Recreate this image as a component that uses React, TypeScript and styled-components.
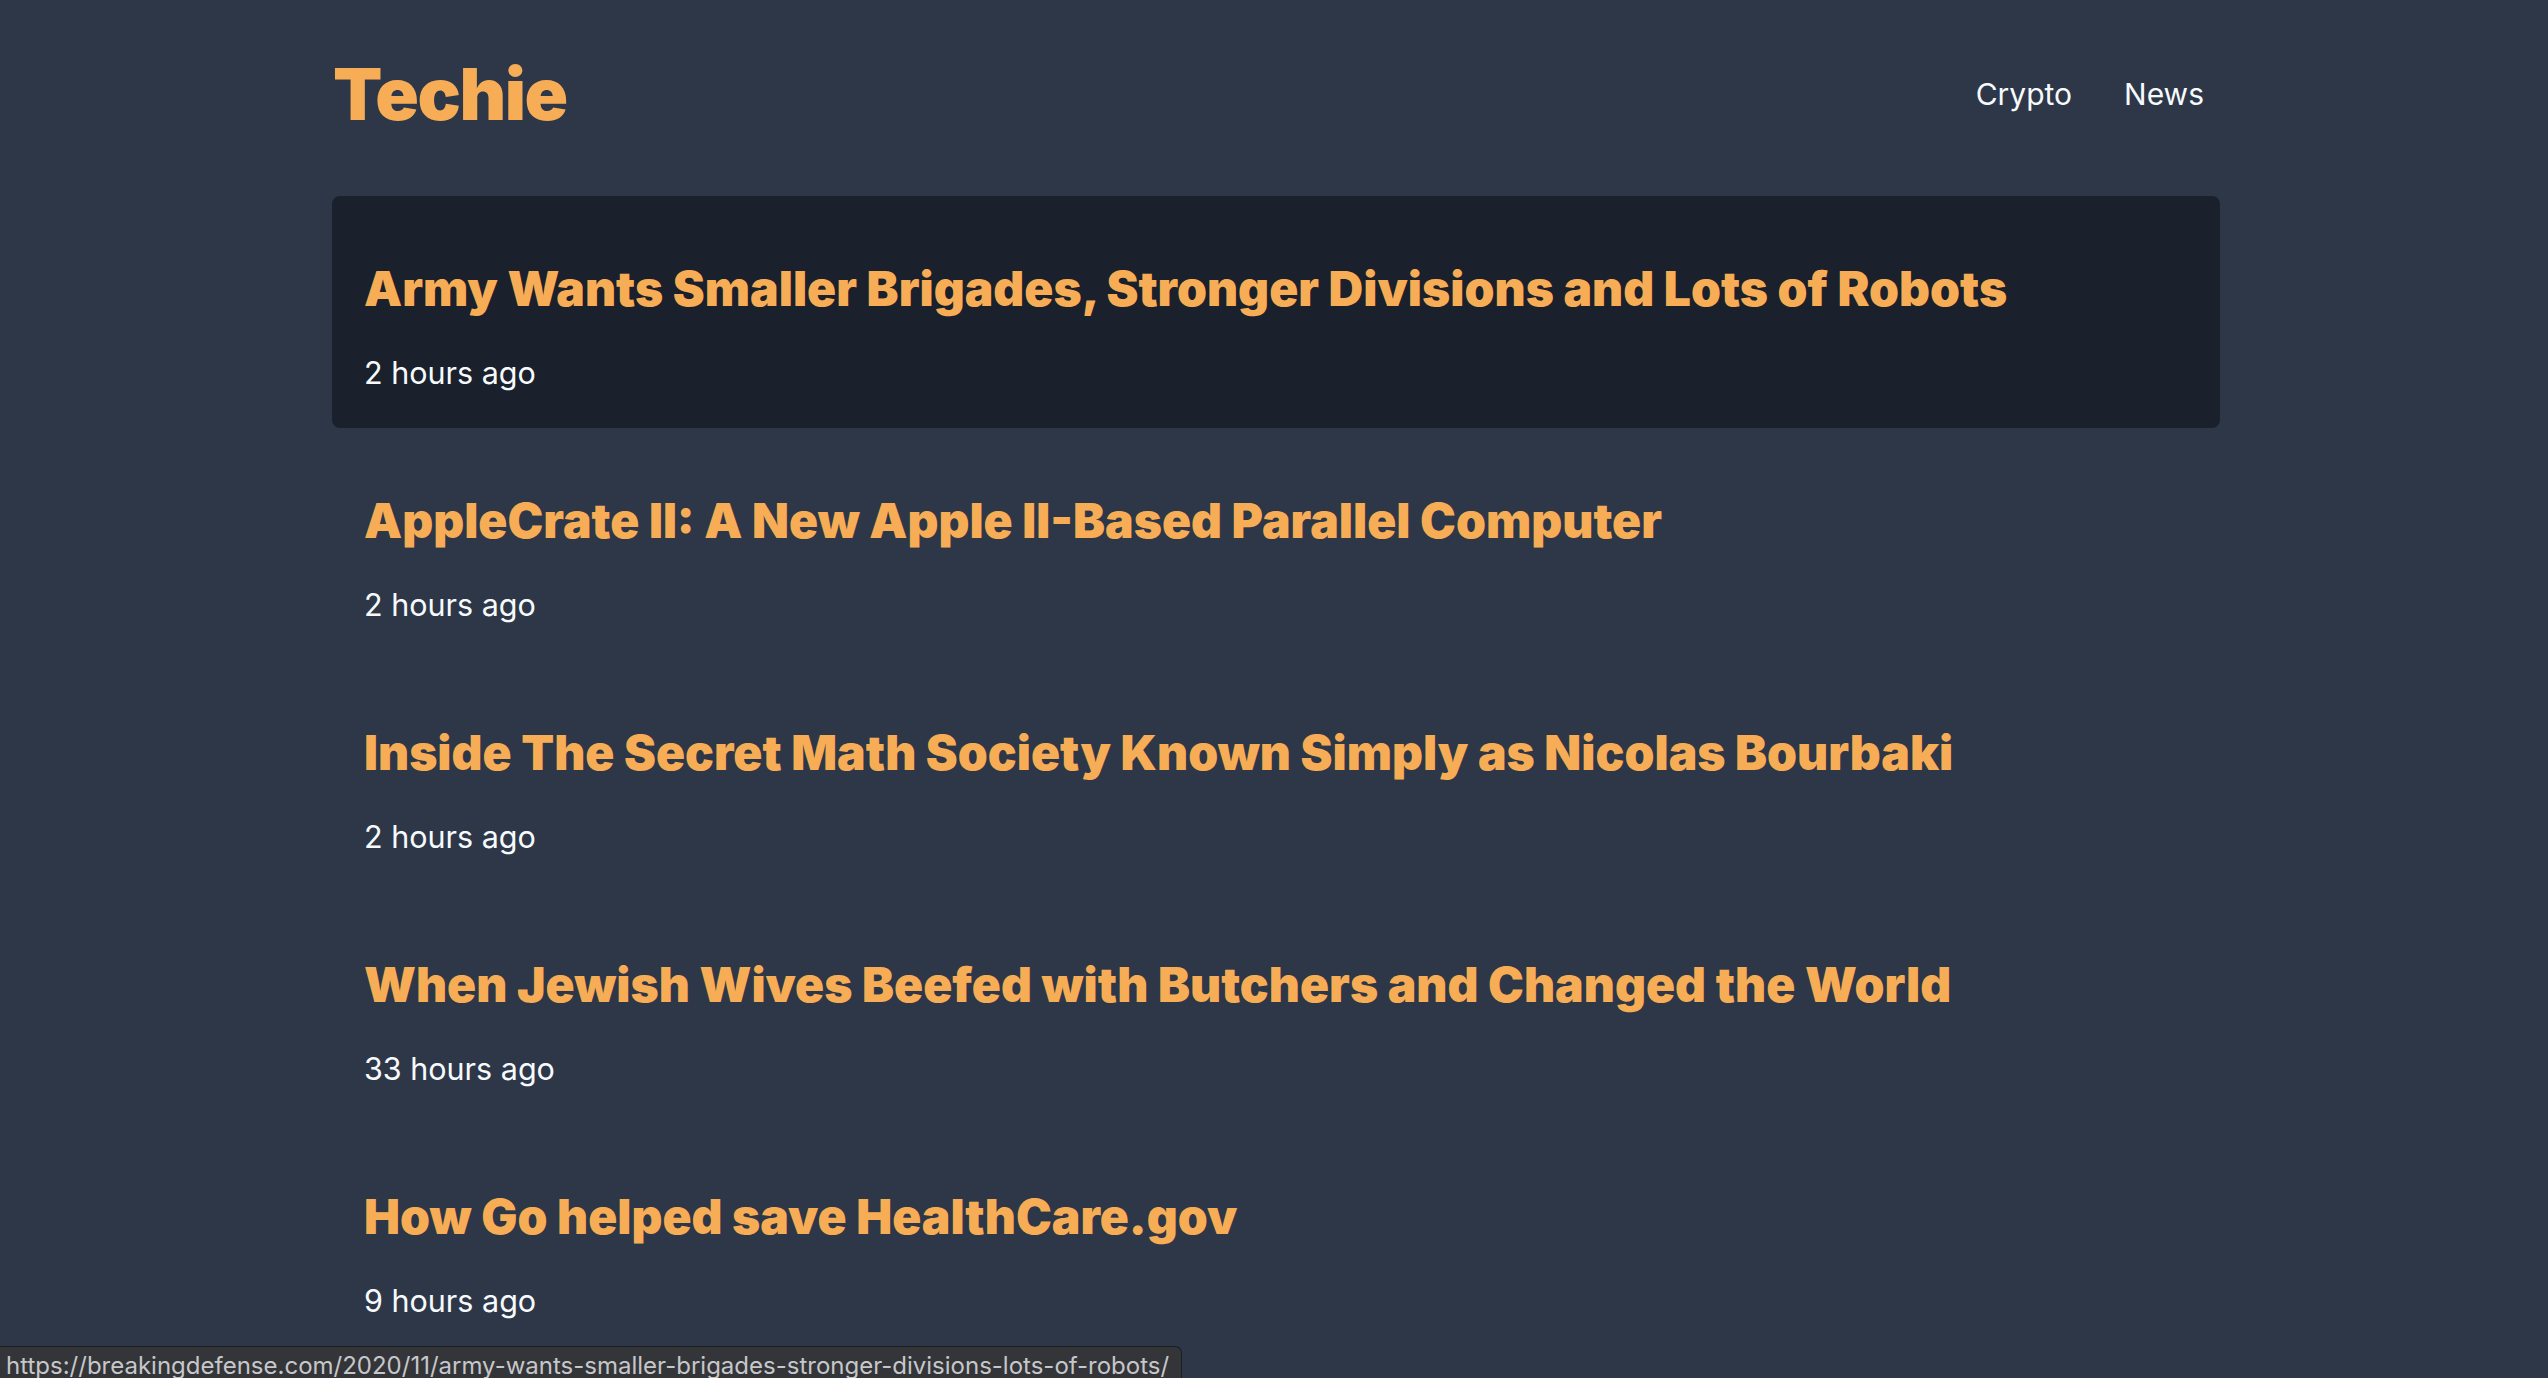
import React from "react";
import styled, { createGlobalStyle } from "styled-components";

const GlobalStyle = createGlobalStyle`
  html, body {
    margin: 0;
    padding: 0;
    background: #2d3748;
    font-family: Inter, "Noto Sans", sans-serif;
    color: #f7fafc;
  }
  * { box-sizing: border-box; }
`;

const Page = styled.div`
  min-height: 100vh;
  background: #2d3748;
`;

const Container = styled.div`
  width: 1888px;
  margin-left: calc(50% - 942px);
`;

const Header = styled.header`
  display: flex;
  justify-content: space-between;
  align-items: center;
  padding: 54px 0 62px 0;
`;

const Logo = styled.a`
  font-size: 72px;
  line-height: 80px;
  font-weight: 900;
  color: #f6ad55;
  text-decoration: none;
  padding-left: 1px;
  letter-spacing: -1.5px;
`;

const Nav = styled.nav`
  display: flex;
  gap: 52px;
  padding-right: 16px;
`;

const NavLink = styled.a`
  font-size: 30px;
  line-height: 45px;
  color: #f7fafc;
  text-decoration: none;
`;

const List = styled.ul`
  list-style: none;
  margin: 0;
  padding: 0;
`;

const Item = styled.li<{ $active?: boolean }>`
  padding: 63px 32px 33px 32px;
  border-radius: 8px;
  background: ${(p) => (p.$active ? "#1a202c" : "transparent")};
`;

const Title = styled.a`
  display: block;
  font-size: 48px;
  line-height: 60px;
  font-weight: 900;
  color: #f6ad55;
  text-decoration: none;
  white-space: nowrap;
`;

const Time = styled.div`
  margin-top: 31px;
  font-size: 30.5px;
  line-height: 45px;
  color: #f7fafc;
`;

const StatusBubble = styled.div`
  position: fixed;
  left: 0;
  bottom: 0;
  height: 32px;
  padding: 6px 12px 0 6px;
  background: #343538;
  border-top: 1px solid #1c1d20;
  border-right: 1px solid #1c1d20;
  border-top-right-radius: 7px;
  color: #c6c7cb;
  font-family: Inter, "Noto Sans", sans-serif;
  font-size: 24px;
  line-height: 25px;
  white-space: nowrap;
  overflow: hidden;
`;

const articles = [
  { title: "Army Wants Smaller Brigades, Stronger Divisions and Lots of Robots", time: "2 hours ago" },
  { title: "AppleCrate II: A New Apple II-Based Parallel Computer", time: "2 hours ago" },
  { title: "Inside The Secret Math Society Known Simply as Nicolas Bourbaki", time: "2 hours ago" },
  { title: "When Jewish Wives Beefed with Butchers and Changed the World", time: "33 hours ago" },
  { title: "How Go helped save HealthCare.gov", time: "9 hours ago" },
];

export default function App() {
  return (
    <Page>
      <GlobalStyle />
      <Container>
        <Header>
          <Logo href="#">Techie</Logo>
          <Nav>
            <NavLink href="#">Crypto</NavLink>
            <NavLink href="#">News</NavLink>
          </Nav>
        </Header>
        <List>
          {articles.map((a, i) => (
            <Item key={i} $active={i === 0}>
              <Title href="#">{a.title}</Title>
              <Time>{a.time}</Time>
            </Item>
          ))}
        </List>
      </Container>
      <StatusBubble>
        https://breakingdefense.com/2020/11/army-wants-smaller-brigades-stronger-divisions-lots-of-robots/
      </StatusBubble>
    </Page>
  );
}
